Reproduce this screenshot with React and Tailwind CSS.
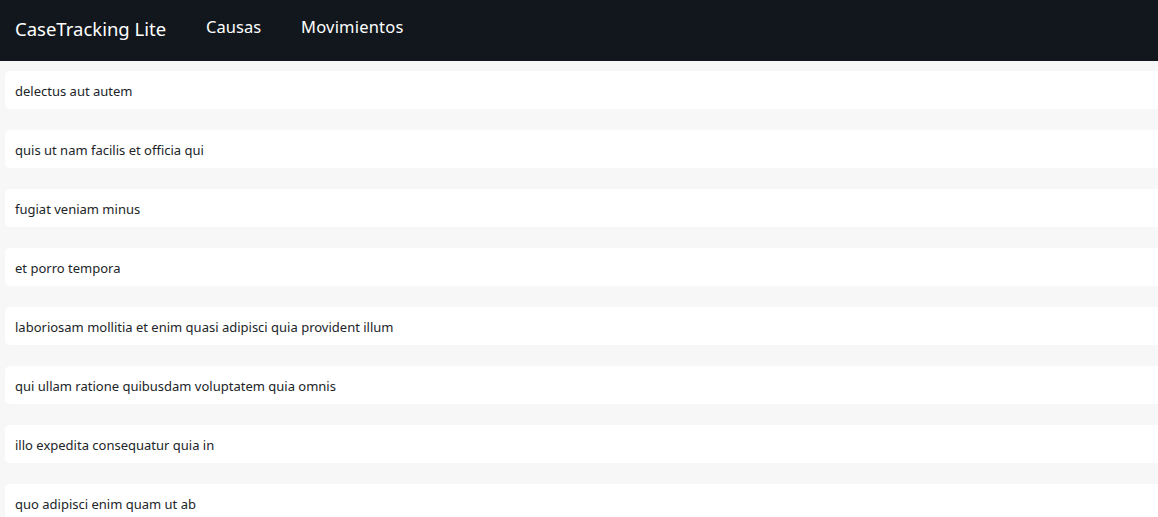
const items = [
  "delectus aut autem",
  "quis ut nam facilis et officia qui",
  "fugiat veniam minus",
  "et porro tempora",
  "laboriosam mollitia et enim quasi adipisci quia provident illum",
  "qui ullam ratione quibusdam voluptatem quia omnis",
  "illo expedita consequatur quia in",
  "quo adipisci enim quam ut ab",
];

export default function App() {
  return (
    <div className="h-[517px] overflow-hidden bg-[#f7f7f7] font-['Noto_Sans',sans-serif] text-[#212529]">
      <nav className="flex h-[61px] items-center bg-[#11171c] px-[15px] text-white">
        <span className="mr-[40px] -mt-[4px] text-[18.5px]">CaseTracking Lite</span>
        <a className="mr-[40px] -mt-[7px] text-[16.5px]">Causas</a>
        <a className="-mt-[7px] text-[16.5px] tracking-[0.2px]">Movimientos</a>
      </nav>
      <ul className="flex flex-col gap-[21px] pl-[5px] pt-[10px]">
        {items.map((title) => (
          <li key={title} className="flex h-[38px] items-center rounded-l-[5px] bg-white px-[10px] pt-[4px] text-[13px]">
            {title}
          </li>
        ))}
      </ul>
    </div>
  );
}
